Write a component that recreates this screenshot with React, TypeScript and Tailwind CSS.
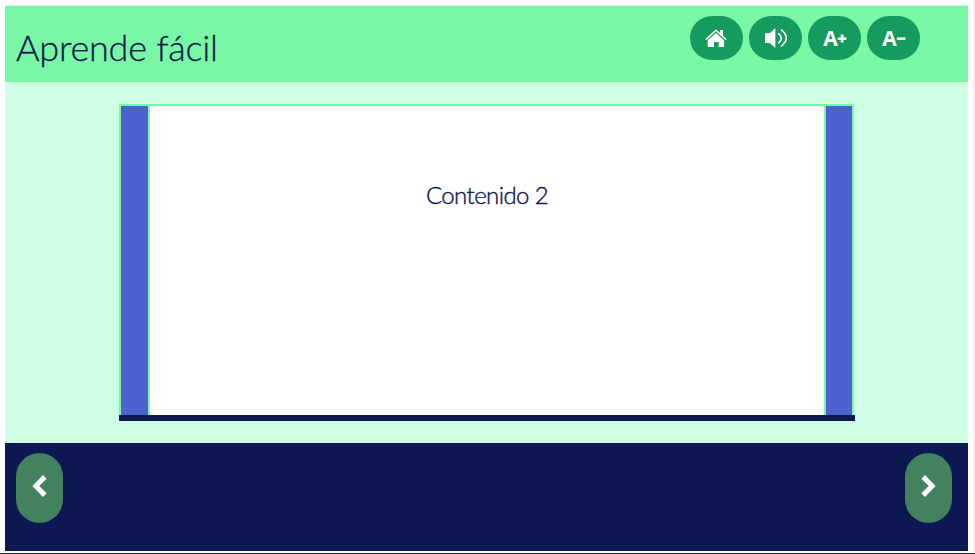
import type { ReactNode } from "react";

function HomeIcon() {
  return (
    <svg width="22" height="19" viewBox="0 0 66 57">
      <path d="M8 34 33 12 57 34V52q0 2-2 2H41V39H27V54H11q-3 0-3-2Z" fill="#fff" />
      <path d="M3 34 33 7 63 34" fill="none" stroke="#169b5f" strokeWidth="4" />
      <path d="M1 30 33 1 45 12V3h9v17l11 10-3 4L33 7 4 34Z" fill="#fff" />
    </svg>
  );
}

function SpeakerIcon() {
  return (
    <svg width="23" height="20" viewBox="0 0 69 60">
      <path d="M3 16H17L34 0V60L17 45H3Z" fill="#fff" />
      <path d="M43 16Q61 30 43 46M51 5Q83 30 51 55" fill="none" stroke="#fff" strokeWidth="5" />
    </svg>
  );
}

function ToolButton({ label, children }: { label: string; children: ReactNode }) {
  return (
    <button aria-label={label} className="flex h-11 w-[53.5px] items-center justify-center rounded-full bg-[#169b5f] font-['Open_Sans',sans-serif] text-[21px] leading-none font-bold text-white">
      {children}
    </button>
  );
}

function NavButton({ label, next = false }: { label: string; next?: boolean }) {
  return (
    <button aria-label={label} className="flex h-[70px] w-[47px] justify-center rounded-full bg-[#43825e] pt-[22px]">
      <svg width="15" height="22" viewBox="0 0 43 66" className={next ? "rotate-180" : ""}>
        <path d="M0 33 32 0 43 11 21 33 43 55 32 66Z" fill="#fff" />
      </svg>
    </button>
  );
}

export default function App() {
  return (
    <div className="flex h-[554px] w-[975px] flex-col overflow-hidden bg-white text-[#0d1751]">
      <div className="flex h-[552px] flex-none">
        <div className="ml-[5px] flex w-[963px] flex-col pt-[5px]">
          <header className="flex h-[77px] flex-none justify-between border-t border-[#d0ffe5] bg-[#79f7a5] pr-12 pl-[11px]">
            <h1 className="pt-[19px] font-[Lato,sans-serif] text-[36px] leading-[44px] font-light tracking-[-0.2px] whitespace-nowrap [-webkit-text-stroke:0.3px_#0d1751]">Aprende fácil</h1>
            <nav className="flex gap-[5.5px] pt-[10.4px]">
              <ToolButton label="Inicio"><HomeIcon /></ToolButton>
              <ToolButton label="Escuchar"><SpeakerIcon /></ToolButton>
              <ToolButton label="Aumentar texto">
                <span className="pl-px">A</span><span className="text-[15px] [-webkit-text-stroke:0.8px_#fff]">+</span>
              </ToolButton>
              <ToolButton label="Reducir texto">
                <span className="pl-px">A</span><span className="text-[15px] [-webkit-text-stroke:0.8px_#fff]">−</span>
              </ToolButton>
            </nav>
          </header>
          <main className="flex h-[360.5px] flex-none flex-col bg-[#ceffe5] pt-[22px] pl-[114px]">
            <section className="flex h-[311px] w-[735px] border-t-2 border-[#79f7a5]">
              <div className="w-[31px] border-x-2 border-[#79f7a5] bg-[#4d61d1]" />
              <div className="flex-1 bg-white pt-[73px] text-center">
                <p className="font-[Lato,sans-serif] text-[24px] leading-8 font-light tracking-[-0.6px] whitespace-nowrap [-webkit-text-stroke:0.4px_#0d1751]">Contenido 2</p>
              </div>
              <div className="w-[30px] border-x-2 border-[#79f7a5] bg-[#4d61d1]" />
            </section>
            <div className="h-[5.5px] w-[736px] bg-[#0d1751]" />
          </main>
          <footer className="flex h-[108.5px] flex-none justify-between bg-[#0d1751] pt-[10.5px] pr-[16.5px] pl-[11px]">
            <NavButton label="Anterior" />
            <NavButton label="Siguiente" next />
          </footer>
        </div>
        <div className="ml-[5px] w-[2px] bg-[#f1f1f1]" />
      </div>
      <div className="mt-px h-px bg-[#292d2b]" />
    </div>
  );
}
